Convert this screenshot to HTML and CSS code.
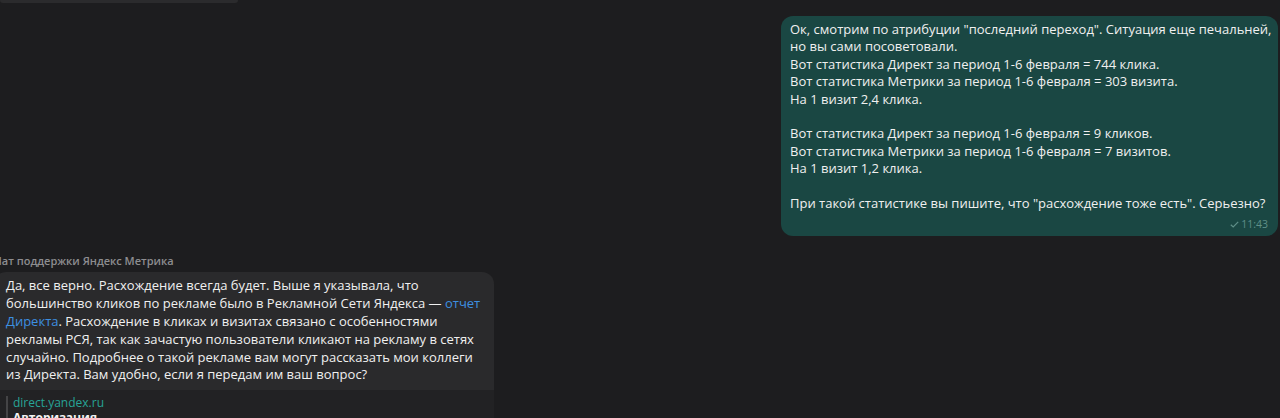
FILE: index.html
```html
<!DOCTYPE html>
<html lang="ru">
<head>
<meta charset="utf-8">
<link rel="stylesheet" href="styles.css">
</head>
<body>
<div class="chat">
  <div class="prev-bubble"></div>

  <div class="row out">
    <div class="bubble bubble-out">
      <p class="text">Ок, смотрим по атрибуции "последний переход". Ситуация еще печальней,<br>но вы сами посоветовали.<br>Вот статистика Директ за период 1-6 февраля = 744 клика.<br>Вот статистика Метрики за период 1-6 февраля = 303 визита.<br>На 1 визит 2,4 клика.<br><br>Вот статистика Директ за период 1-6 февраля = 9 кликов.<br>Вот статистика Метрики за период 1-6 февраля = 7 визитов.<br>На 1 визит 1,2 клика.<br><br>При такой статистике вы пишите, что "расхождение тоже есть". Серьезно?</p>
      <div class="meta">
        <svg class="check" width="9" height="7" viewBox="0 0 9 7"><path d="M0.8 3.8 L3.2 6 L8.2 0.8" fill="none" stroke="currentColor" stroke-width="1.2"/></svg>
        <span>11:43</span>
      </div>
    </div>
  </div>

  <div class="in-group">
    <div class="sender">Чат поддержки Яндекс Метрика</div>
    <div class="bubble bubble-in">
      <p class="text">Да, все верно. Расхождение всегда будет. Выше я указывала, что<br>большинство кликов по рекламе было в Рекламной Сети Яндекса — <a class="link">отчет</a><br><a class="link">Директа</a>. Расхождение в кликах и визитах связано с особенностями<br>рекламы РСЯ, так как зачастую пользователи кликают на рекламу в сетях<br>случайно. Подробнее о такой рекламе вам могут рассказать мои коллеги<br>из Директа. Вам удобно, если я передам им ваш вопрос?</p>
      <div class="preview">
        <div class="preview-bar"></div>
        <div class="preview-body">
          <div class="preview-site">direct.yandex.ru</div>
          <div class="preview-title">Авторизация</div>
        </div>
      </div>
    </div>
  </div>
</div>
</body>
</html>
```

FILE: styles.css
```css
html, body {
  margin: 0;
  padding: 0;
  background: #1d1d1f;
  height: 418px;
  overflow: hidden;
}

.chat {
  font-family: "Open Sans", "Noto Sans", sans-serif;
  color: #f0f0f0;
}

.prev-bubble {
  width: 238px;
  height: 3px;
  background: #2b2b2d;
  border-radius: 0 0 6px 6px;
}

.row.out {
  display: flex;
  justify-content: flex-end;
  margin-top: 13px;
  padding-right: 2px;
}

.bubble {
  border-radius: 12px;
  box-sizing: border-box;
}

.bubble-out {
  width: 497px;
  background: #1a4743;
  padding: 5px 10px 5px 9px;
}

.text {
  margin: 0;
  font-size: 13px;
  line-height: 17.4px;
  white-space: nowrap;
}

.meta {
  display: flex;
  justify-content: flex-end;
  align-items: center;
  gap: 2px;
  color: #5f8f88;
  font-size: 10.5px;
  line-height: 14px;
  margin-top: 5px;
}

.check {
  display: block;
}

.in-group {
  margin-top: 18px;
  margin-left: -6px;
}

.sender {
  font-size: 11px;
  line-height: 14px;
  color: #8d8d90;
  font-weight: 600;
  margin-bottom: 4px;
}

.bubble-in {
  width: 500px;
  background: #2a2a2c;
  padding: 5px 10px 0 12px;
  border-radius: 12px 12px 0 0;
}

.bubble-in .text {
  line-height: 17.8px;
}

.link {
  color: #3d8fe0;
}

.preview {
  display: flex;
  margin: 6px -10px 0 -12px;
  padding: 6px 10px 0 12px;
  background: #222224;
}

.preview-bar {
  width: 2px;
  background: #444446;
  margin-right: 5px;
}

.preview-body {
  font-size: 12px;
  line-height: 14.5px;
}

.preview-site {
  color: #27a497;
}

.preview-title {
  color: #f2f2f2;
  font-weight: 700;
}
```
